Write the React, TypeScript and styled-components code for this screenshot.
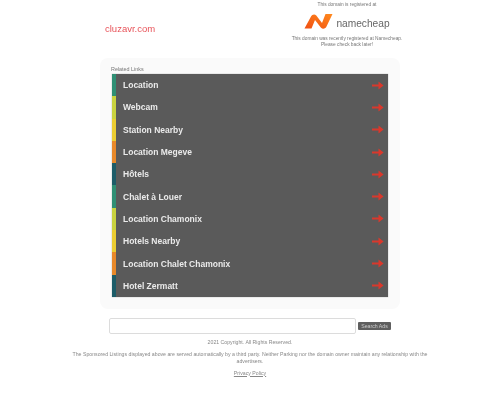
import React from "react";
import styled, { createGlobalStyle } from "styled-components";

const Global = createGlobalStyle`
  html, body { margin: 0; padding: 0; background: #fff; }
  body { font-family: "Liberation Sans", Arial, sans-serif; }
`;

const Page = styled.div`
  width: 500px;
  height: 417px;
  overflow: hidden;
  filter: blur(0.7px);
  display: flex;
  flex-direction: column;
  align-items: center;
`;

const Header = styled.header`
  width: 300px;
  height: 56px;
  display: flex;
  justify-content: space-between;
  align-items: flex-start;
`;

const Domain = styled.h1`
  margin: 23px 0 0 5px;
  font-size: 9.5px;
  line-height: 12px;
  font-weight: 400;
  color: #e8545a;
`;

const Registrar = styled.div`
  width: 116px;
  margin-right: -5px;
  padding-top: 2px;
  display: flex;
  flex-direction: column;
  align-items: center;
  color: #777;
  font-size: 4.8px;
  line-height: 6px;
  text-align: center;
  white-space: nowrap;
`;

const Logo = styled.div`
  display: flex;
  align-items: center;
  gap: 3px;
  height: 19px;
  margin: 4px 0 5px;
`;

const Wordmark = styled.span`
  margin-top: 4px;
  color: #666;
  font-size: 10.2px;
  line-height: 12px;
`;

const Panel = styled.main`
  width: 300px;
  height: 251px;
  box-sizing: border-box;
  margin-top: 2px;
  padding: 8px 12px 10px;
  background: #fafafa;
  border-radius: 8px;
  display: flex;
  flex-direction: column;
`;

const Caption = styled.div`
  height: 8px;
  margin-left: -1px;
  font-size: 5.4px;
  line-height: 7px;
  color: #777;
`;

const List = styled.ul`
  margin: 0;
  padding: 0;
  list-style: none;
  background: #5a5a5a;
  display: flex;
  flex-direction: column;
  box-shadow: 0 0 1px #999;
`;

const Row = styled.li<{ $accent: string }>`
  height: 22.3px;
  box-sizing: border-box;
  padding: 0 4px 0 7px;
  border-left: 4px solid ${(p) => p.$accent};
  display: flex;
  align-items: center;
  justify-content: space-between;
  color: #eaeaea;
  font-size: 8.5px;
  font-weight: 700;
`;

const SearchBar = styled.form`
  width: 282px;
  margin-top: 9px;
  display: flex;
  align-items: center;
  gap: 2px;
`;

const SearchInput = styled.div`
  flex: 1;
  height: 14px;
  background: #fff;
  border: 1px solid #dcdcdc;
  border-radius: 2px;
`;

const SearchButton = styled.div`
  width: 33px;
  height: 8px;
  background: #5f5f5f;
  color: #ccc;
  font-size: 5.2px;
  line-height: 8px;
  text-align: center;
  border-radius: 1px;
`;

const Footer = styled.footer`
  width: 366px;
  margin-top: 5px;
  color: #888;
  font-size: 5.2px;
  line-height: 6.5px;
  text-align: center;
`;

const FooterLine = styled.p`
  margin: 0 0 5.5px;
`;

const PrivacyLink = styled.span`
  text-decoration: underline;
`;

const links: [string, string][] = [
  ["Location", "#2f8f74"],
  ["Webcam", "#c9d23f"],
  ["Station Nearby", "#ebcd32"],
  ["Location Megeve", "#e8892a"],
  ["Hôtels", "#1d5c68"],
  ["Chalet à Louer", "#2f8f74"],
  ["Location Chamonix", "#c9d23f"],
  ["Hotels Nearby", "#ebcd32"],
  ["Location Chalet Chamonix", "#e8892a"],
  ["Hotel Zermatt", "#1d5c68"],
];

const Arrow = () => (
  <svg width="12" height="9" viewBox="0 0 12 9" aria-hidden="true">
    <path d="M0 3.4H6.5V0.5L11.6 4.5L6.5 8.5V5.6H0Z" fill="#d9382c" />
  </svg>
);

const Mark = () => (
  <svg width="29" height="17" viewBox="0 0 29 17" aria-hidden="true">
    <defs>
      <linearGradient id="nc" x1="0" y1="1" x2="1" y2="0">
        <stop offset="0" stopColor="#f04e12" />
        <stop offset="1" stopColor="#ff8a1e" />
      </linearGradient>
    </defs>
    <path
      d="M0.5 15.5L7 3.5C8 1.5 10.5 0.7 12.3 2.5L18 10L21.5 1H28.5L22.5 13.5C21.5 15.8 18.7 16.5 16.8 14.5L11 7L7.5 15.5Z"
      fill="url(#nc)"
    />
  </svg>
);

export default function App() {
  return (
    <>
      <Global />
      <Page>
        <Header>
          <Domain>cluzavr.com</Domain>
          <Registrar>
            <span>This domain is registered at</span>
            <Logo>
              <Mark />
              <Wordmark>namecheap</Wordmark>
            </Logo>
            <span>This domain was recently registered at Namecheap.</span>
            <span>Please check back later!</span>
          </Registrar>
        </Header>
        <Panel>
          <Caption>Related Links</Caption>
          <List>
            {links.map(([label, accent]) => (
              <Row key={label} $accent={accent}>
                {label}
                <Arrow />
              </Row>
            ))}
          </List>
        </Panel>
        <SearchBar>
          <SearchInput />
          <SearchButton>Search Ads</SearchButton>
        </SearchBar>
        <Footer>
          <FooterLine>2021 Copyright. All Rights Reserved.</FooterLine>
          <FooterLine>
            The Sponsored Listings displayed above are served automatically by a third party. Neither Parking nor the domain owner maintain any relationship with the advertisers.
          </FooterLine>
          <PrivacyLink>Privacy Policy</PrivacyLink>
        </Footer>
      </Page>
    </>
  );
}
